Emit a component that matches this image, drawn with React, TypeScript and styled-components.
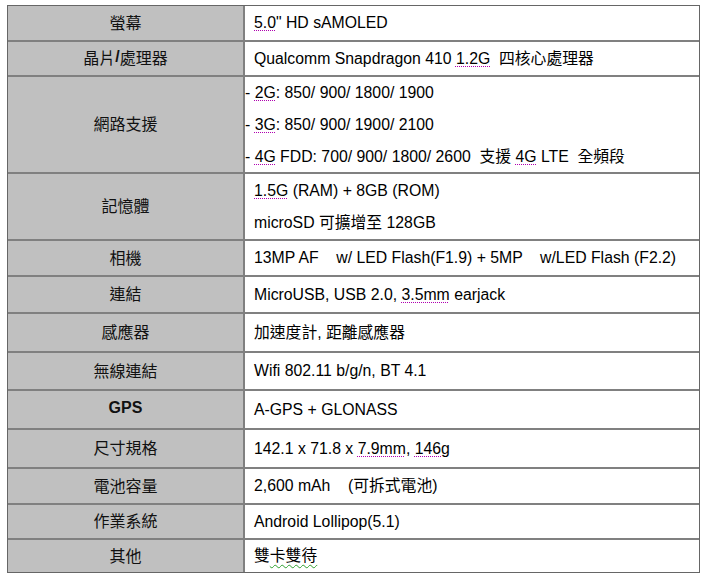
import React from "react";
import styled, { createGlobalStyle } from "styled-components";

const Global = createGlobalStyle`
  html, body { margin: 0; padding: 0; background: #ffffff; }
  body { font-family: "Liberation Sans", "Noto Sans CJK TC", sans-serif; }
`;

const Page = styled.div`
  padding: 5px 0 0 7px;
`;

const Table = styled.div<{ $rows: string }>`
  display: grid;
  box-sizing: border-box;
  width: 693px;
  grid-template-columns: 235px 454px;
  grid-template-rows: ${(p) => p.$rows};
  gap: 2px;
  background: #808080;
  border: 1px solid #666666;
`;

const Label = styled.div<{ $bold?: boolean }>`
  background: #c0c0c0;
  display: flex;
  align-items: center;
  justify-content: center;
  padding-bottom: 3px;
  font-size: 16px;
  color: #111111;
  font-weight: ${(p) => (p.$bold ? 700 : 400)};
`;

const Value = styled.div<{ $flush?: boolean }>`
  background: #ffffff;
  display: flex;
  flex-direction: column;
  justify-content: center;
  padding-left: ${(p) => (p.$flush ? 0 : 9)}px;
  font-size: 15.8px;
  color: #000000;
  overflow: visible;
`;

const Line = styled.div`
  line-height: 32px;
  white-space: pre;
`;

const Strong = styled.span`
  font-weight: 700;
`;

const Dot = styled.span`
  text-decoration: underline dotted #b000b0;
  text-decoration-thickness: 1px;
  text-underline-offset: 2px;
`;

const Wavy = styled.span`
  text-decoration: underline wavy #2e9e2e;
  text-decoration-thickness: 1px;
  text-underline-offset: 3px;
`;

type Row = {
  label: React.ReactNode;
  height: number;
  bold?: boolean;
  flush?: boolean;
  lines: React.ReactNode[];
};

const rows: Row[] = [
  { label: "螢幕", height: 34, lines: [<><Dot>5.0</Dot>" HD sAMOLED</>] },
  {
    label: <>晶片<Strong>/</Strong>處理器</>,
    height: 33,
    lines: [<>Qualcomm Snapdragon 410 <Dot>1.2G</Dot>  四核心處理器</>],
  },
  {
    label: "網路支援",
    height: 95,
    flush: true,
    lines: [
      <>- <Dot>2G</Dot>: 850/ 900/ 1800/ 1900</>,
      <>- <Dot>3G</Dot>: 850/ 900/ 1900/ 2100</>,
      <>- <Dot>4G</Dot> FDD: 700/ 900/ 1800/ 2600  支援 <Dot>4G</Dot> LTE  全頻段</>,
    ],
  },
  {
    label: "記憶體",
    height: 65,
    lines: [<><Dot>1.5G</Dot> (RAM) + 8GB (ROM)</>, <>microSD 可擴增至 128GB</>],
  },
  { label: "相機", height: 34, lines: ["13MP AF    w/ LED Flash(F1.9) + 5MP    w/LED Flash (F2.2)"] },
  { label: "連結", height: 35, lines: [<>MicroUSB, USB 2.0, <Dot>3.5mm</Dot> earjack</>] },
  { label: "感應器", height: 37, lines: ["加速度計, 距離感應器"] },
  { label: "無線連結", height: 36, lines: ["Wifi 802.11 b/g/n, BT 4.1"] },
  { label: "GPS", height: 37, bold: true, lines: ["A-GPS + GLONASS"] },
  { label: "尺寸規格", height: 37, lines: [<>142.1 x 71.8 x <Dot>7.9mm</Dot>, <Dot>146g</Dot></>] },
  { label: "電池容量", height: 34, lines: ["2,600 mAh    (可拆式電池)"] },
  { label: "作業系統", height: 33, lines: ["Android Lollipop(5.1)"] },
  { label: "其他", height: 32, lines: [<>雙<Wavy>卡雙待</Wavy></>] },
];

export default function App() {
  const template = rows.map((r) => `${r.height}px`).join(" ");
  return (
    <Page>
      <Global />
      <Table $rows={template}>
        {rows.map((r, i) => (
          <React.Fragment key={i}>
            <Label $bold={r.bold}>{r.label}</Label>
            <Value $flush={r.flush}>
              {r.lines.map((l, j) => (
                <Line key={j}>{l}</Line>
              ))}
            </Value>
          </React.Fragment>
        ))}
      </Table>
    </Page>
  );
}
